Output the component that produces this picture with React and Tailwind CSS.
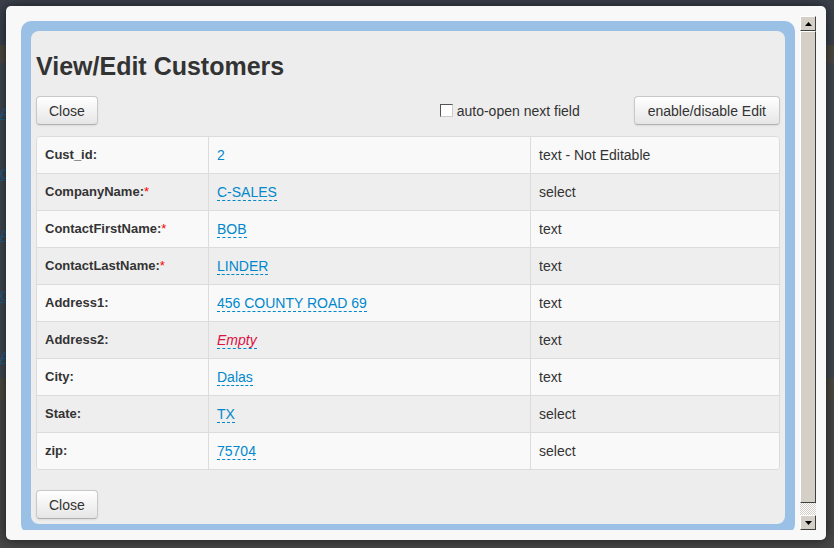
import React from 'react';

const rows = [
  { label: 'Cust_id:', value: '2', type: 'text - Not Editable', plain: true },
  { label: 'CompanyName:', req: true, value: 'C-SALES', type: 'select' },
  { label: 'ContactFirstName:', req: true, value: 'BOB', type: 'text' },
  { label: 'ContactLastName:', req: true, value: 'LINDER', type: 'text' },
  { label: 'Address1:', value: '456 COUNTY ROAD 69', type: 'text' },
  { label: 'Address2:', value: 'Empty', type: 'text', empty: true },
  { label: 'City:', value: 'Dalas', type: 'text' },
  { label: 'State:', value: 'TX', type: 'select' },
  { label: 'zip:', value: '75704', type: 'select' },
];

const Btn = ({ children, wide }) => (
  <button className={`h-[29px] ${wide ? 'px-[13px]' : 'px-[12px]'} rounded-[4px] border border-[#c8c8c8] border-b-[#b0b0b0] bg-gradient-to-b from-white to-[#e6e6e6] text-[14px] leading-[20px] text-[#333] shadow-[inset_0_1px_0_rgba(255,255,255,0.3),0_1px_2px_rgba(0,0,0,0.08)]`}>
    {children}
  </button>
);

const Arrow = ({ up }) => (
  <div className="h-[15px] w-full bg-[#d4d0c8] border border-t-white border-l-white border-r-[#404040] border-b-[#404040] flex items-center justify-center">
    <svg width="7" height="4" viewBox="0 0 7 4">
      <path d={up ? 'M0 4 L3.5 0 L7 4 Z' : 'M0 0 L3.5 4 L7 0 Z'} fill="#000" />
    </svg>
  </div>
);

export default function App() {
  return (
    <div className="relative w-[834px] h-[548px] overflow-hidden bg-[#464646] font-['Liberation_Sans',Arial,sans-serif]">
      {/* page behind the overlay */}
      <div className="flex flex-col w-full">
        <div className="h-[45px] bg-[#3b404b]" />
        <div className="h-[18px] bg-[#4b4842]" />
        <div className="h-[315px] bg-[#40454e] flex flex-col gap-[40px] pt-[40px] text-[14px] text-[#1d5f8a]">
          <span className="underline">A</span>
          <span className="underline">C</span>
          <span className="underline">A</span>
          <span className="underline">G</span>
          <span className="underline">A</span>
        </div>
        <div className="h-[22px] bg-[#4b4842]" />
      </div>

      {/* modal */}
      <div className="absolute left-[6px] top-[6px] w-[820px] h-[534px] rounded-[5px] bg-[#f8f8f8] p-[10px] shadow-[0_0_12px_rgba(0,0,0,0.6)]">
        <div className="flex h-full">
          <div className="flex-1 overflow-hidden px-[5px] pt-[5px]">
            <div className="rounded-[10px] bg-[#9bc0e6] p-[10px]">
              <div className="rounded-[8px] bg-[#ededed] px-[5px] pt-[15px] pb-[5px] text-[#333]">
                <h3 className="h-[40px] leading-[40px] text-[25px] font-bold mb-[10px]">View/Edit Customers</h3>

                <div className="flex items-center">
                  <Btn>Close</Btn>
                  <label className="ml-auto mr-[54px] flex items-center gap-[4px] text-[14px] leading-[20px]">
                    <span className="w-[13px] h-[13px] bg-white border border-t-[#555] border-l-[#555] border-r-[#ccc] border-b-[#ccc]" />
                    auto-open next field
                  </label>
                  <Btn wide>enable/disable Edit</Btn>
                </div>

                <div className="mt-[11px] rounded-[4px] border border-[#dcdcdc] overflow-hidden">
                  {rows.map((r, i) => (
                    <div
                      key={r.label}
                      className={`grid grid-cols-[171px_322px_1fr] ${i > 0 ? 'border-t border-[#dcdcdc]' : ''} ${i % 2 === 0 ? 'bg-[#f9f9f9]' : 'bg-[#eeeeee]'}`}
                    >
                      <div className="px-[8px] py-[8px] leading-[20px] text-[13px] font-bold">
                        {r.label}
                        {r.req && <span className="text-[#ff0000] font-normal">*</span>}
                      </div>
                      <div className="border-l border-[#dcdcdc] px-[8px] py-[8px] leading-[20px] text-[14px]">
                        {r.plain ? (
                          <span className="text-[#0088cc]">{r.value}</span>
                        ) : (
                          <span className={`border-b border-dashed border-[#0088cc] ${r.empty ? 'italic text-[#dd1144]' : 'text-[#0088cc]'}`}>
                            {r.value}
                          </span>
                        )}
                      </div>
                      <div className="border-l border-[#dcdcdc] px-[8px] py-[8px] leading-[20px] text-[14px]">{r.type}</div>
                    </div>
                  ))}
                </div>

                <div className="mt-[20px]">
                  <Btn>Close</Btn>
                </div>
              </div>
            </div>
          </div>

          {/* scrollbar */}
          <div className="w-[16px] h-full flex flex-col">
            <Arrow up />
            <div className="h-[472px] bg-[#d4d0c8] border border-t-white border-l-white border-r-[#404040] border-b-[#404040]" />
            <div className="flex-1 bg-[repeating-conic-gradient(#d4d0c8_0%_25%,#ffffff_0%_50%)] bg-[length:2px_2px]" />
            <Arrow />
          </div>
        </div>
      </div>
    </div>
  );
}
